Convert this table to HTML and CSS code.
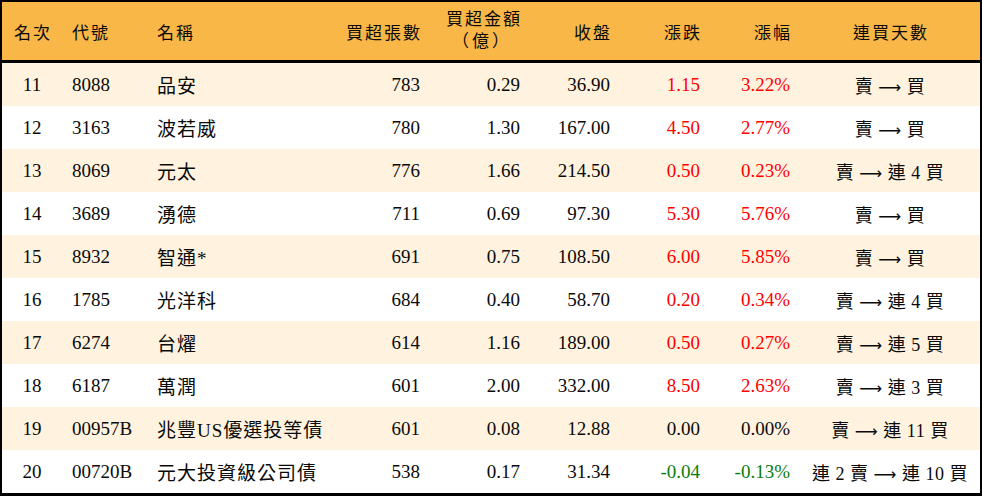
FILE: index.html
```html
<!DOCTYPE html>
<html lang="zh-Hant">
<head>
<meta charset="utf-8">
<title>買超排行</title>
<link rel="stylesheet" href="styles.css">
</head>
<body>
<div class="frame">
<table class="rank">
<colgroup>
<col class="c1"><col class="c2"><col class="c3"><col class="c4"><col class="c5"><col class="c6"><col class="c7"><col class="c8"><col class="c9">
</colgroup>
<thead>
<tr>
<th class="ctr">名次</th>
<th class="lft">代號</th>
<th class="lft">名稱</th>
<th class="rgt">買超張數</th>
<th class="rgt two"><span class="l1">買超金額</span><span class="l2">（億）</span></th>
<th class="rgt">收盤</th>
<th class="rgt">漲跌</th>
<th class="rgt">漲幅</th>
<th class="ctr">連買天數</th>
</tr>
</thead>
<tbody>
<tr class="alt"><td class="ctr">11</td><td class="lft">8088</td><td class="lft cjk">品安</td><td class="rgt">783</td><td class="rgt">0.29</td><td class="rgt">36.90</td><td class="rgt up">1.15</td><td class="rgt up">3.22%</td><td class="ctr days">賣 <span class="arw">⟶</span> 買</td></tr>
<tr><td class="ctr">12</td><td class="lft">3163</td><td class="lft cjk">波若威</td><td class="rgt">780</td><td class="rgt">1.30</td><td class="rgt">167.00</td><td class="rgt up">4.50</td><td class="rgt up">2.77%</td><td class="ctr days">賣 <span class="arw">⟶</span> 買</td></tr>
<tr class="alt"><td class="ctr">13</td><td class="lft">8069</td><td class="lft cjk">元太</td><td class="rgt">776</td><td class="rgt">1.66</td><td class="rgt">214.50</td><td class="rgt up">0.50</td><td class="rgt up">0.23%</td><td class="ctr days">賣 <span class="arw">⟶</span> 連 4 買</td></tr>
<tr><td class="ctr">14</td><td class="lft">3689</td><td class="lft cjk">湧德</td><td class="rgt">711</td><td class="rgt">0.69</td><td class="rgt">97.30</td><td class="rgt up">5.30</td><td class="rgt up">5.76%</td><td class="ctr days">賣 <span class="arw">⟶</span> 買</td></tr>
<tr class="alt"><td class="ctr">15</td><td class="lft">8932</td><td class="lft cjk">智通*</td><td class="rgt">691</td><td class="rgt">0.75</td><td class="rgt">108.50</td><td class="rgt up">6.00</td><td class="rgt up">5.85%</td><td class="ctr days">賣 <span class="arw">⟶</span> 買</td></tr>
<tr><td class="ctr">16</td><td class="lft">1785</td><td class="lft cjk">光洋科</td><td class="rgt">684</td><td class="rgt">0.40</td><td class="rgt">58.70</td><td class="rgt up">0.20</td><td class="rgt up">0.34%</td><td class="ctr days">賣 <span class="arw">⟶</span> 連 4 買</td></tr>
<tr class="alt"><td class="ctr">17</td><td class="lft">6274</td><td class="lft cjk">台燿</td><td class="rgt">614</td><td class="rgt">1.16</td><td class="rgt">189.00</td><td class="rgt up">0.50</td><td class="rgt up">0.27%</td><td class="ctr days">賣 <span class="arw">⟶</span> 連 5 買</td></tr>
<tr><td class="ctr">18</td><td class="lft">6187</td><td class="lft cjk">萬潤</td><td class="rgt">601</td><td class="rgt">2.00</td><td class="rgt">332.00</td><td class="rgt up">8.50</td><td class="rgt up">2.63%</td><td class="ctr days">賣 <span class="arw">⟶</span> 連 3 買</td></tr>
<tr class="alt"><td class="ctr">19</td><td class="lft">00957B</td><td class="lft cjk">兆豐US優選投等債</td><td class="rgt">601</td><td class="rgt">0.08</td><td class="rgt">12.88</td><td class="rgt">0.00</td><td class="rgt">0.00%</td><td class="ctr days">賣 <span class="arw">⟶</span> 連 11 買</td></tr>
<tr><td class="ctr">20</td><td class="lft">00720B</td><td class="lft cjk">元大投資級公司債</td><td class="rgt">538</td><td class="rgt">0.17</td><td class="rgt">31.34</td><td class="rgt down">-0.04</td><td class="rgt down">-0.13%</td><td class="ctr days">連 2 賣 <span class="arw">⟶</span> 連 10 買</td></tr>
</tbody>
</table>
</div>
</body>
</html>
```
FILE: styles.css
```css
html, body {
  margin: 0;
  padding: 0;
  background: #ffffff;
}
.frame {
  width: 978px;
  border-style: solid;
  border-color: #000000;
  border-width: 2px 2px 3px 2px;
}
.rank {
  width: 978px;
  border-collapse: collapse;
  border-spacing: 0;
  table-layout: fixed;
  font-family: "Liberation Serif", "Noto Sans CJK TC", serif;
  font-size: 19px;
  color: #0a0a0a;
}
.c1 { width: 60px; }
.c2 { width: 85px; }
.c3 { width: 193px; }
.c4 { width: 90px; }
.c5 { width: 100px; }
.c6 { width: 90px; }
.c7 { width: 90px; }
.c8 { width: 90px; }
.c9 { width: 180px; }
.rank th {
  background: #f9b748;
  height: 58px;
  padding: 0 10px;
  font-weight: normal;
  font-size: 17px;
  letter-spacing: 2px;
  border-bottom: 3px solid #000000;
  vertical-align: middle;
  white-space: nowrap;
  color: #0a0a0a;
}
.rank th.two {
  line-height: 22px;
}
.rank th.two .l1 {
  display: block;
  text-align: right;
}
.rank th.two .l2 {
  display: block;
  text-align: center;
  padding-left: 12px;
  letter-spacing: 3px;
}
.rank td {
  height: 43px;
  padding: 0 10px;
  vertical-align: middle;
  white-space: nowrap;
}
.rank td.cjk {
  letter-spacing: 1px;
}
.rank td.days {
  padding: 0;
  font-size: 18px;
  letter-spacing: 0.5px;
}
.arw {
  font-family: "DejaVu Sans", sans-serif;
  font-size: 16px;
}
.rank tr.alt td {
  background: #fff3df;
}
.ctr { text-align: center; }
.lft { text-align: left; }
.rgt { text-align: right; }
.rank th.rgt { padding-right: 8px; padding-left: 0; }
.rank th.ctr { padding-left: 10px; padding-right: 8px; }
.up { color: #ff0000; }
.down { color: #0a7d0a; }
```
